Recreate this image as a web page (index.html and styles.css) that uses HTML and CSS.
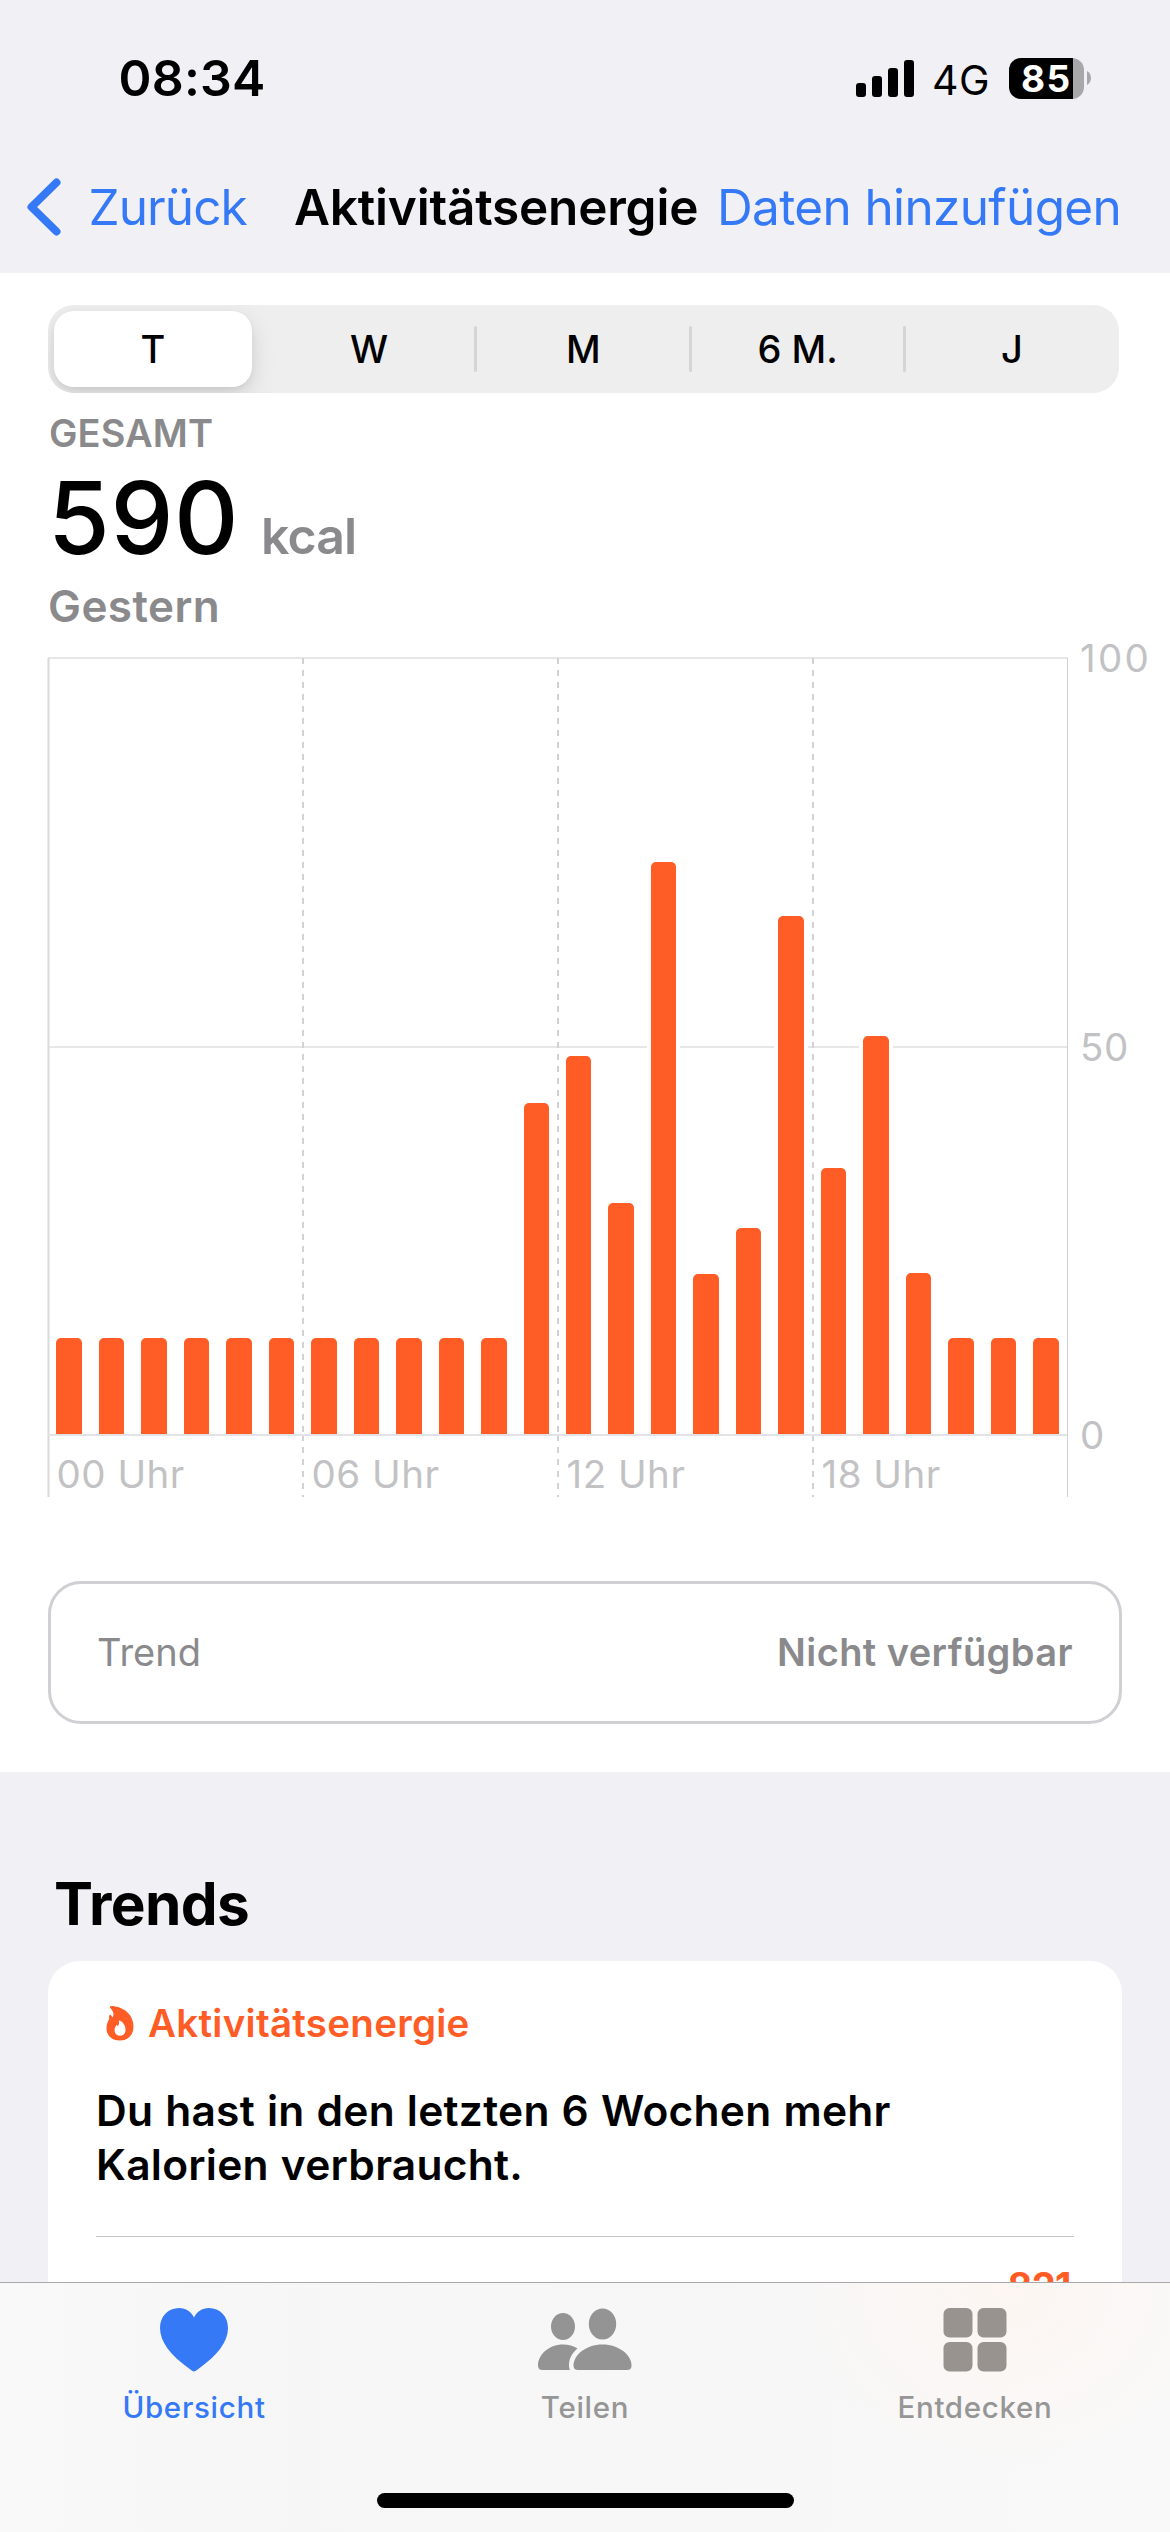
FILE: index.html
```html
<!DOCTYPE html>
<html lang="de">
<head>
<meta charset="utf-8">
<title>Aktivitätsenergie</title>
<link rel="stylesheet" href="styles.css">
</head>
<body>
<div class="screen">
  <header class="header">
    <div class="status">
      <span class="status-time">08:34</span>
      <div class="status-icons">
        <svg class="signal" width="58" height="37" viewBox="0 0 58 37">
          <rect x="0" y="23" width="10" height="14" rx="3"/>
          <rect x="16" y="16" width="10" height="21" rx="3"/>
          <rect x="32" y="8" width="10" height="29" rx="3"/>
          <rect x="48" y="0" width="10" height="37" rx="3"/>
        </svg>
        <span class="network">4G</span>
        <div class="battery"><span class="battery-level">85</span></div>
        <svg class="battery-nub" width="4" height="14" viewBox="0 0 4 14"><path d="M0 0C2.6 1.5 4 4 4 7s-1.4 5.500-4 7z"/></svg>
      </div>
    </div>
    <nav class="navbar">
      <a class="nav-back">
        <svg width="34" height="58" viewBox="0 0 34 58"><path d="M29.500 4.500L4.500 29l25 24.500"/></svg>
        <span class="nav-back-label">Zurück</span>
      </a>
      <h1 class="nav-title">Aktivitätsenergie</h1>
      <a class="nav-action">Daten hinzufügen</a>
    </nav>
  </header>

  <section class="overview">
    <div class="segments">
      <span class="segment segment-active">T</span>
      <span class="segment">W</span>
      <span class="segment segment-divided">M</span>
      <span class="segment segment-divided">6 M.</span>
      <span class="segment segment-divided">J</span>
    </div>
    <div class="summary-label">GESAMT</div>
    <div class="summary-value"><span class="amount">590</span><span class="unit">kcal</span></div>
    <div class="summary-date">Gestern</div>

    <div class="chart">
      <div class="plot">
        <svg class="grid-lines" width="1022" height="840" viewBox="0 0 1022 840">
          <path class="line-horizontal" d="M0 1H1020M0 390H1020"/>
          <path class="line-solid" d="M0.500 1V840"/>
          <path class="line-edge" d="M1019.500 1V840"/>
          <path class="line-dashed" d="M255 1V777M510 1V777M765 1V777"/>
          <path class="line-dashed" d="M255 778V840M510 778V840M765 778V840"/>
        </svg>
        <div class="bars">
          <i class="bar" style="height:96px"></i>
          <i class="bar" style="height:96px"></i>
          <i class="bar" style="height:96px"></i>
          <i class="bar" style="height:96px"></i>
          <i class="bar" style="height:96px"></i>
          <i class="bar" style="height:96px"></i>
          <i class="bar" style="height:96px"></i>
          <i class="bar" style="height:96px"></i>
          <i class="bar" style="height:96px"></i>
          <i class="bar" style="height:96px"></i>
          <i class="bar" style="height:96px"></i>
          <i class="bar" style="height:331px"></i>
          <i class="bar" style="height:378px"></i>
          <i class="bar" style="height:231px"></i>
          <i class="bar" style="height:572px"></i>
          <i class="bar" style="height:160px"></i>
          <i class="bar" style="height:206px"></i>
          <i class="bar" style="height:518px"></i>
          <i class="bar" style="height:266px"></i>
          <i class="bar" style="height:398px"></i>
          <i class="bar" style="height:161px"></i>
          <i class="bar" style="height:96px"></i>
          <i class="bar" style="height:96px"></i>
          <i class="bar" style="height:96px"></i>
        </div>
        <div class="hours">
          <span>00 Uhr</span><span>06 Uhr</span><span>12 Uhr</span><span>18 Uhr</span>
        </div>
      </div>
      <div class="scale"><span class="scale-max">100</span><span>50</span><span>0</span></div>
    </div>

    <div class="trend-box">
      <span class="trend-name">Trend</span>
      <span class="trend-state">Nicht verfügbar</span>
    </div>
  </section>

  <section class="trends">
    <h2 class="trends-title">Trends</h2>
    <article class="card">
      <div class="card-head">
        <svg class="flame" width="28" height="35" viewBox="0 0 28 35">
          <path fill-rule="evenodd" d="M4 0.800C4.500 0.100 6 0 8 0.200C19 1.400 27.500 9.500 27.500 20.500C27.500 29 22 34.500 14 34.500C6 34.500 0.500 29.500 0.500 22.500C0.500 18.500 1.500 16 3 13.500C3.300 12 2.900 10.800 3.200 9.700C3.600 8.500 4.700 8.700 5.400 9.700L6.600 11.500C8.300 8.500 7.400 5 4.500 2.300C4 1.800 3.700 1.300 4 0.800ZM13.800 14.600C13.300 14.300 12.700 14.700 12.900 15.400C13.300 17.400 12.800 18.600 12.300 19.500C12 20 11.500 19.900 11.200 19.600L10.800 19.200C10.400 18.900 10.100 19.200 10 19.700C9.200 21.200 8.600 22.500 8.600 24.300C8.600 27.800 10.800 29.700 14 29.700C17.300 29.700 19.500 27.600 19.500 24C19.500 19.700 17.300 16.400 13.800 14.600Z"/>
        </svg>
        <span class="card-topic">Aktivitätsenergie</span>
      </div>
      <p class="card-text">Du hast in den letzten 6 Wochen mehr<br>Kalorien verbraucht.</p>
      <div class="card-value">821</div>
    </article>
  </section>

  <footer class="tabbar">
    <div class="tabs">
      <a class="tab tab-active">
        <svg width="68" height="64" viewBox="0 0 68 64"><path d="M34 63.500C33 63.500 31.500 62.500 29 60.500C11 47.500 0 34 0 20C0 8.500 8 0 19 0C26 0 31.500 4 34 9.500C36.500 4 42 0 49 0C60 0 68 8.500 68 20C68 34 57 47.500 39 60.500C36.500 62.500 35 63.500 34 63.500Z"/></svg>
        <span>Übersicht</span>
      </a>
      <a class="tab">
        <svg width="94" height="64" viewBox="0 0 94 64">
          <ellipse cx="25" cy="18.500" rx="12" ry="13.500"/>
          <ellipse cx="64.500" cy="16" rx="13.700" ry="15.500"/>
          <path d="M4.500 62C1.500 62 0 60.500 0 57.500C0 47 10.500 36.500 25 36.500C30.500 36.500 35.500 38 39.500 40.500C34 45 31 51 31 57C31 59 31.300 60.700 32 62Z"/>
          <path d="M40 62C37 62 35.500 60.500 35.500 57.500C35.500 47 48 36.500 64.500 36.500C81 36.500 93.500 47 93.500 57.500C93.500 60.500 92 62 89 62Z"/>
        </svg>
        <span>Teilen</span>
      </a>
      <a class="tab tab-discover">
        <svg width="64" height="64" viewBox="0 0 64 64">
          <rect x="0.500" y="0" width="29" height="29.500" rx="6"/>
          <rect x="34.500" y="0" width="29" height="29.500" rx="6"/>
          <rect x="0.500" y="34" width="29" height="29.500" rx="6"/>
          <rect x="34.500" y="34" width="29" height="29.500" rx="6"/>
        </svg>
        <span>Entdecken</span>
      </a>
    </div>
    <div class="home-indicator"></div>
  </footer>
</div>
</body>
</html>
```
FILE: styles.css
```css
* { box-sizing: border-box; }
body {
  margin: 0;
  font-family: Inter, "Liberation Sans", sans-serif;
  color: #000;
  background: #f1f0f5;
}
h1, h2, p { margin: 0; }
svg { display: block; }
.screen {
  position: relative;
  width: 1170px;
  height: 2532px;
  overflow: hidden;
  background: #f1f0f5;
}

/* Status bar and navigation */
.header { height: 273px; }
.status {
  display: flex;
  align-items: center;
  justify-content: space-between;
  height: 156px;
  padding: 0 79px 0 118.500px;
}
.status-time { font-size: 50px; font-weight: 600; letter-spacing: 0.200px; }
.status-icons { display: flex; align-items: center; }
.network { margin: 3px 0 0 18px; width: 77px; font-size: 41px; letter-spacing: 0.500px; }
.battery {
  display: flex;
  align-items: center;
  width: 75px;
  height: 41px;
  padding-left: 12px;
  border-radius: 12px;
  background: linear-gradient(90deg, #000 64px, #a8a8ab 64px);
}
.battery-level { color: #fff; font-size: 37px; font-weight: 700; letter-spacing: 1.500px; line-height: 41px; }
.battery-nub { margin-left: 3px; fill: #a8a8ab; }

.navbar {
  display: flex;
  align-items: center;
  height: 102px;
  padding-left: 27px;
  font-size: 49.500px;
  line-height: 60px;
  white-space: nowrap;
}
.nav-back { display: flex; align-items: center; width: 267px; color: #3579f7; }
.nav-back svg { fill: none; stroke: #3579f7; stroke-width: 8; stroke-linecap: round; stroke-linejoin: round; }
.nav-back-label { margin-left: 27.500px; letter-spacing: -0.900px; }
.nav-title { width: 423px; font-size: 49.500px; font-weight: 600; letter-spacing: -0.200px; }
.nav-action { color: #3579f7; letter-spacing: -0.640px; }

/* Overview */
.overview { height: 1499px; padding: 32px 48px 0; background: #fff; }
.segments {
  display: flex;
  width: 1071px;
  height: 88px;
  border-radius: 26px;
  background: #eee;
  overflow: hidden;
}
.segment {
  display: flex;
  align-items: center;
  justify-content: center;
  flex: 1;
  font-size: 38px;
  font-weight: 500;
  position: relative;
}
.segment-active {
  flex: 0 0 198px;
  height: 76px;
  margin: 6px 10px 6px 6px;
  border-radius: 20px;
  background: #fff;
  box-shadow: 0 9px 24px rgba(0, 0, 0, 0.120), 0 3px 6px rgba(0, 0, 0, 0.060);
}
.segment-divided::before {
  content: "";
  position: absolute;
  left: -2px;
  top: 21px;
  width: 3px;
  height: 46px;
  border-radius: 2px;
  background: #d5d5d6;
}
.summary-label { margin-top: 10px; padding-left: 1px; font-size: 38px; font-weight: 600; letter-spacing: 0.100px; line-height: 61px; color: #8a8a8d; }
.summary-value { display: flex; align-items: baseline; margin-top: 4px; height: 100px; line-height: 100px; }
.amount { width: 213px; font-size: 100px; font-weight: 500; letter-spacing: 0.600px; }
.unit { font-size: 50px; font-weight: 600; letter-spacing: -0.900px; color: #8a8a8d; }
.summary-date { margin-top: 12px; font-size: 44px; font-weight: 600; line-height: 52px; letter-spacing: 0.450px; color: #8a8a8d; }

.chart { display: flex; margin-top: 25px; height: 840px; width: 1122px; color: #c2c2c4; font-size: 38.500px; }
.plot { position: relative; width: 1019px; }
.grid-lines { position: absolute; left: 0; top: 0; overflow: visible; }
.grid-lines path { fill: none; stroke-width: 2; }
.line-horizontal { stroke: #e7e7e9; }
.line-solid { stroke: #dadadc; }
.grid-lines .line-edge { stroke: #d2d2d4; stroke-width: 1; }
.line-dashed { stroke: #d2d2d4; stroke-dasharray: 6 6; }
.bars {
  position: relative;
  display: grid;
  grid-template-columns: repeat(24, 1fr);
  align-items: end;
  justify-items: center;
  height: 779px;
  border-bottom: 2px solid #e3e3e5;
}
.bar {
  width: 25.500px;
  border-radius: 5px 5px 0 0;
  background: #ff5c26;
  box-shadow: -4px 0 #fff, 4px 0 #fff;
}
.hours { position: relative; display: grid; grid-template-columns: repeat(4, 255px); padding-top: 18px; line-height: 40px; letter-spacing: 0.500px; }
.hours span { padding-left: 8.500px; }
.scale { display: flex; flex-direction: column; justify-content: space-between; height: 817px; margin-top: -19px; padding-left: 13px; line-height: 40px; letter-spacing: 0.500px; }
.scale-max { letter-spacing: 2.300px; }

.trend-box {
  display: flex;
  align-items: center;
  justify-content: space-between;
  width: 1074px;
  height: 143px;
  margin-top: 84px;
  padding: 0 46px 1px;
  border: 3px solid #cfcfd4;
  border-radius: 33px;
  font-size: 38px;
  color: #8a8a8d;
}
.trend-state { font-weight: 600; letter-spacing: 0.410px; }

/* Trends */
.trends { padding: 97px 48px 0; }
.trends-title { padding-left: 6px; font-size: 58.500px; font-weight: 700; line-height: 70px; letter-spacing: -0.650px; }
.card { height: 500px; margin-top: 22px; padding: 39px 48px 0; border-radius: 32px; background: #fff; }
.card-head { display: flex; align-items: center; height: 46px; padding-left: 10px; }
.flame { fill: #ff5c26; }
.card-topic { margin-left: 14px; font-size: 38.500px; font-weight: 600; letter-spacing: 0.270px; color: #ff5c26; }
.card-text { margin-top: 38px; padding-bottom: 44px; border-bottom: 1px solid #c4c4c6; font-size: 42.500px; font-weight: 600; line-height: 54px; letter-spacing: 0.250px; word-spacing: 1px; white-space: nowrap; }
.card-value { margin: 29px 3px 0 0; text-align: right; font-size: 38px; font-weight: 700; line-height: 40px; letter-spacing: -0.500px; color: #ff5c26; }

/* Tab bar lies over the scrolled content */
.tabbar {
  position: absolute;
  left: 0;
  bottom: 0;
  width: 1170px;
  height: 250px;
  border-top: 1px solid #a9a9ac;
  background:
    radial-gradient(ellipse 220px 180px at 1010px 10px, rgba(255, 245, 240, 0.700), rgba(252, 248, 246, 0)),
    linear-gradient(90deg, #f9f9f9, #f6f6f6 25%, #f7f7f7 60%, #f9f9f9);
}
.tabs { display: flex; justify-content: center; height: 210px; }
.tab {
  display: flex;
  flex-direction: column;
  align-items: center;
  width: 390px;
  padding-top: 25px;
  font-size: 29.500px;
  font-weight: 500;
  line-height: 36px;
  letter-spacing: 0.700px;
  color: #969696;
  fill: #949494;
}
.tab span { margin-top: 17px; }
.tab-active { color: #3579f7; fill: #3579f7; padding-right: 2px; }
.tab-discover { fill: #98938f; }
.home-indicator { width: 417px; height: 15px; margin: 0 auto; border-radius: 8px; background: #000; }
```
